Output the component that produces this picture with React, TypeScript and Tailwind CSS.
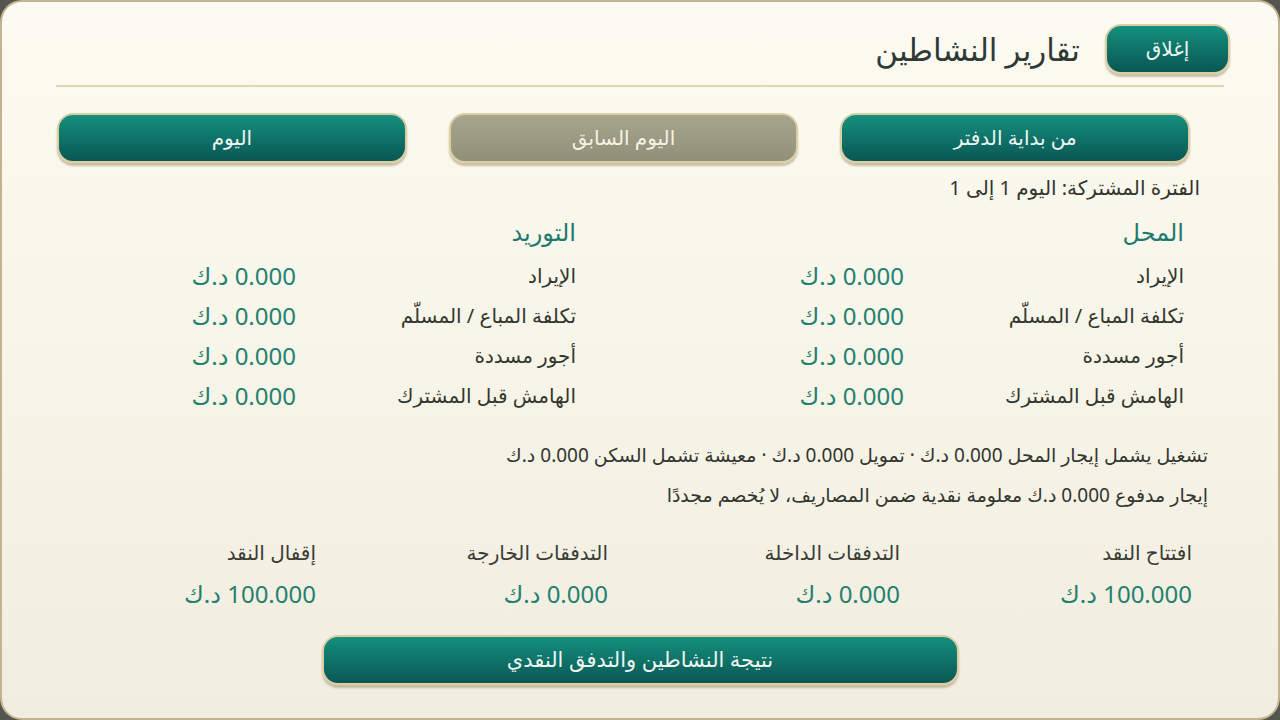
import React from "react"

const teal =
  "bg-gradient-to-b from-[#14907f] to-[#0a5753] text-[#eef6f1] border-2 border-[#dccda3] shadow-[0_3px_2px_rgba(160,150,110,0.55)]"
const gray =
  "bg-gradient-to-b from-[#a6a68e] to-[#918f77] text-[#f6f3e6] border-2 border-[#dccda3] shadow-[0_3px_2px_rgba(160,150,110,0.55)]"

const rows = ["الإيراد", "تكلفة المباع / المسلّم", "أجور مسددة", "الهامش قبل المشترك"]

function Column({ title }: { title: string }) {
  return (
    <div className="w-[608px] shrink-0">
      <div className="h-[30px] text-[24px] leading-[30px] text-[#1f7a6d] mb-[9px]">{title}</div>
      {rows.map((r) => (
        <div key={r} className="flex h-[40px] items-center">
          <div className="w-[280px] shrink-0 text-[20px] text-[#34372f]">{r}</div>
          <div className="text-[24px] text-[#24806f]">0.000 د.ك</div>
        </div>
      ))}
    </div>
  )
}

const flows = [
  { label: "افتتاح النقد", value: "100.000 د.ك" },
  { label: "التدفقات الداخلة", value: "0.000 د.ك" },
  { label: "التدفقات الخارجة", value: "0.000 د.ك" },
  { label: "إقفال النقد", value: "100.000 د.ك" },
]

export default function App() {
  return (
    <div
      dir="rtl"
      className="w-[1280px] h-[720px] bg-[#55554f]"
      style={{ fontFamily: '"Noto Sans", "DejaVu Sans", sans-serif' }}
    >
      <div className="h-full rounded-[22px] border-2 border-[#c3b48f] bg-gradient-to-b from-[#fdfbf1] to-[#f1ede0] overflow-hidden">
        {/* Header */}
        <div className="flex items-center gap-[25px] pt-[22px] pr-[48px]">
          <button className={`h-[50px] w-[125px] rounded-[16px] text-[20px] ${teal}`}>إغلاق</button>
          <h1 className="text-[31px] text-[#2e3a35]">تقارير النشاطين</h1>
        </div>
        <div className="mx-[54px] mt-[11px] h-[2px] bg-[#e2d6b5]" />

        {/* Range buttons */}
        <div className="grid grid-cols-3 gap-[42px] mt-[26px] pr-[88px] pl-[55px]">
          <button className={`h-[50px] rounded-[16px] text-[20px] ${teal}`}>من بداية الدفتر</button>
          <button className={`h-[50px] rounded-[16px] text-[20px] ${gray}`}>اليوم السابق</button>
          <button className={`h-[50px] rounded-[16px] text-[20px] ${teal}`}>اليوم</button>
        </div>

        <div className="mt-[12px] pr-[78px] text-[20px] leading-[26px] text-[#33352f]">
          الفترة المشتركة: اليوم 1 إلى 1
        </div>

        {/* Two columns */}
        <div className="flex mt-[16px] pr-[94px]">
          <Column title="المحل" />
          <Column title="التوريد" />
        </div>

        {/* Notes */}
        <div className="mt-[19px] pr-[70px] text-[19px] text-[#33352f]">
          <div className="h-[40px] flex items-center">
            تشغيل يشمل إيجار المحل 0.000 د.ك · تمويل 0.000 د.ك · معيشة تشمل السكن 0.000 د.ك
          </div>
          <div className="h-[40px] flex items-center">
            إيجار مدفوع 0.000 د.ك معلومة نقدية ضمن المصاريف، لا يُخصم مجددًا
          </div>
        </div>

        {/* Cash flow */}
        <div className="flex mt-[24px] pr-[86px]">
          {flows.map((f) => (
            <div key={f.label} className="w-[292px] shrink-0">
              <div className="h-[28px] leading-[28px] text-[20px] text-[#3a3c35]">{f.label}</div>
              <div className="mt-[11px] h-[32px] leading-[32px] text-[24px] text-[#24806f]">{f.value}</div>
            </div>
          ))}
        </div>

        <div className="flex justify-center mt-[25px]">
          <button className={`h-[50px] w-[637px] rounded-[16px] text-[21px] ${teal}`}>
            نتيجة النشاطين والتدفق النقدي
          </button>
        </div>
      </div>
    </div>
  )
}
